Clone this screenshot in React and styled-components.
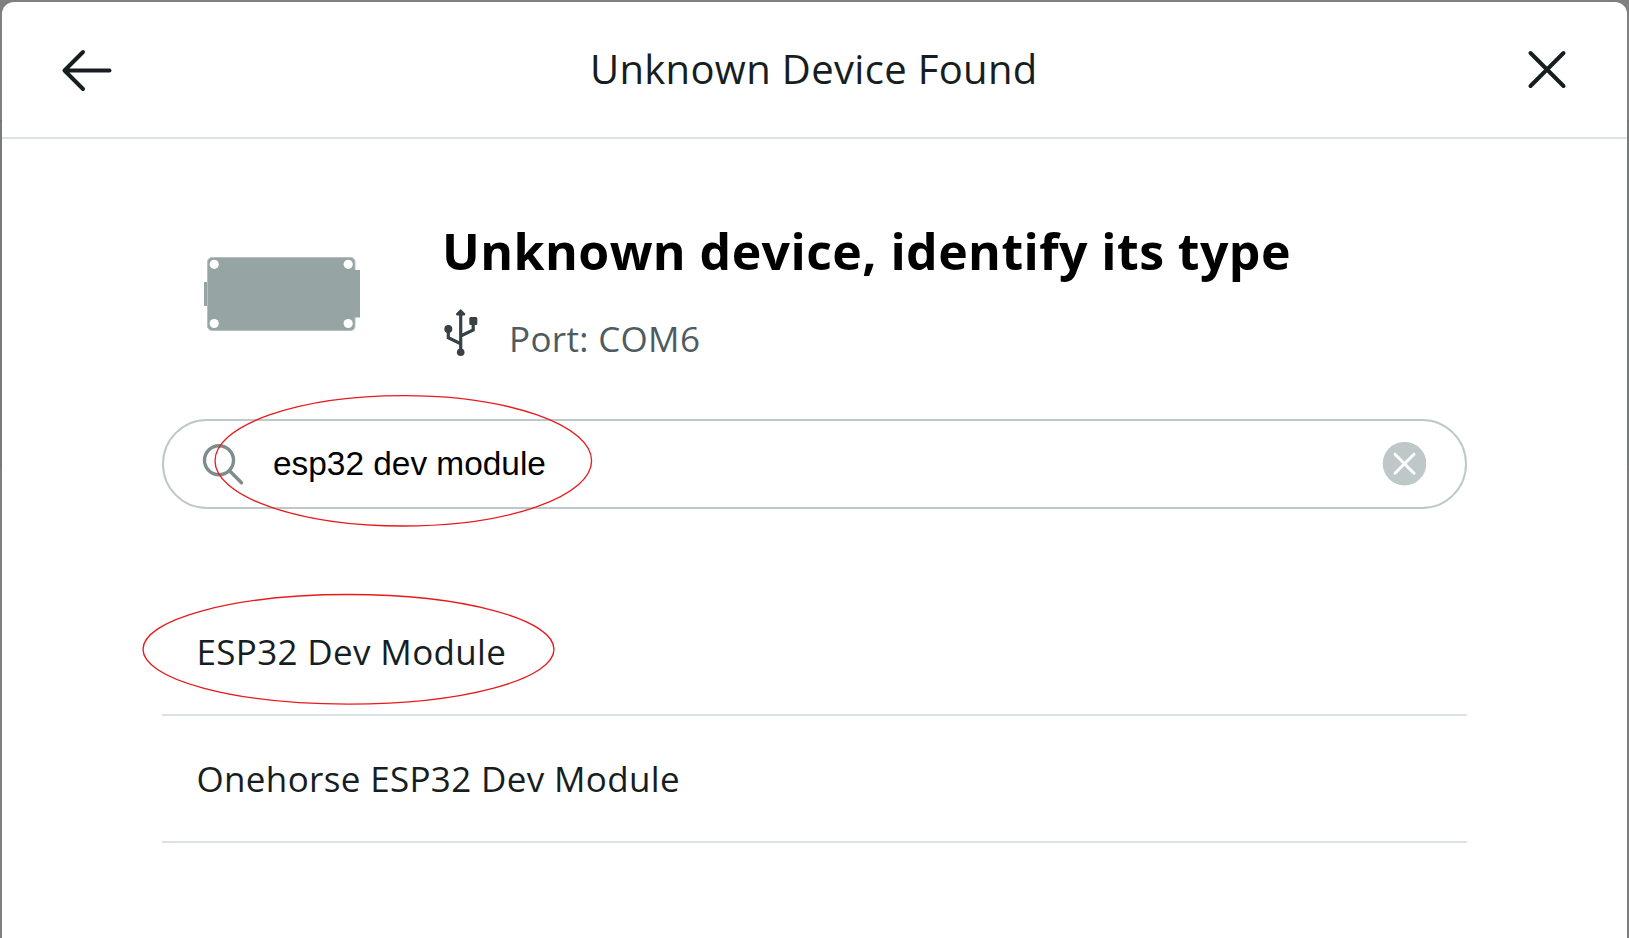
import React from "react";
import styled, { createGlobalStyle } from "styled-components";

const GlobalStyle = createGlobalStyle`
  * { box-sizing: border-box; }
  body { margin: 0; background: #7f7f7f; overflow: hidden; }
`;

const Backdrop = styled.div`
  width: 1629px;
  height: 938px;
  padding: 2px 2px 0;
  background: linear-gradient(#808080 0 120px, #6f7374 120px 121px, #787b7c 121px 470px, #7f7f7f 470px);
  font-family: "Open Sans", sans-serif;
`;

const Dialog = styled.main`
  position: relative;
  height: 936px;
  border-radius: 12px 12px 0 0;
  background: #fff;
`;

const Header = styled.header`
  display: grid;
  grid-template-columns: 1fr auto 1fr;
  align-items: center;
  height: 137px;
  padding: 0 60.5px 0 56px;
  border-bottom: 2px solid #dae3e3;
`;

const Title = styled.h1`
  margin: 0;
  padding: 0 0 2px 3px;
  font-size: 40px;
  font-weight: 400;
  line-height: 54px;
  letter-spacing: 0.33px;
  color: #171e21;
`;

const IconButton = styled.button`
  display: flex;
  justify-self: ${(p) => (p.$end ? "end" : "start")};
  padding: 0;
  border: 0;
  background: none;
`;

const Content = styled.div`
  padding: 78px 160px 0;
`;

const Device = styled.section`
  display: flex;
  height: 202px;
  padding-left: 42px;
`;

const BoardSlot = styled.div`
  width: 238px;
  padding-top: 40px;
`;

const DeviceName = styled.h2`
  margin: 0;
  font-size: 50px;
  font-weight: 700;
  line-height: 68px;
  letter-spacing: 0.43px;
  color: #000;
  white-space: nowrap;
`;

const Port = styled.div`
  display: flex;
  gap: 31px;
  padding: 24px 0 0 2px;
`;

const PortName = styled.span`
  padding-top: 6px;
  font-size: 35px;
  line-height: 48px;
  letter-spacing: 0.33px;
  color: #4e5b61;
`;

const SearchBar = styled.div`
  display: flex;
  align-items: center;
  height: 90px;
  padding: 0 39px 0 38px;
  border: 2px solid #bfc8c8;
  border-radius: 45px;
`;

const SearchText = styled.span`
  flex: 1;
  margin-left: 29px;
  padding-bottom: 1px;
  font-family: "Liberation Sans", Arial, sans-serif;
  font-size: 33.4px;
  line-height: 38px;
  color: #000;
`;

const Results = styled.ul`
  margin: 80px 0 0;
  padding: 0;
  list-style: none;
`;

const Result = styled.li`
  display: flex;
  align-items: center;
  height: 127px;
  padding-left: 34.5px;
  border-bottom: 2px solid #dae3e3;
  font-size: 35px;
  letter-spacing: 0.34px;
  color: #171e21;
`;

const Annotations = styled.svg`
  position: absolute;
  left: -2px;
  top: -2px;
  pointer-events: none;
`;

const BackIcon = () => (
  <svg width="58" height="44" viewBox="0 0 58 44" fill="none" stroke="#171e21" strokeWidth="4" strokeLinecap="round" strokeLinejoin="round">
    <path d="M25 4 6.500 22.500l18.500 18.500M6.500 22.500h45" />
  </svg>
);

const CloseIcon = () => (
  <svg width="40" height="40" viewBox="0 0 40 40" fill="none" stroke="#171e21" strokeWidth="4" strokeLinecap="round">
    <path d="m3.500 3 33 33m0-33-33 33" />
  </svg>
);

const Board = () => (
  <svg width="156" height="74" viewBox="0 0 156 74">
    <path fill="#97a4a4" d="M0 25h3v24H0z" />
    <rect x="3.500" y=".5" width="147.500" height="73" rx="4.500" fill="#97a4a4" stroke="#b4c0c0" />
    <path fill="#97a4a4" d="M150 13h6v47.500h-6z" />
    <g fill="#fff">
      <circle cx="10.200" cy="7.300" r="4.600" />
      <circle cx="144.200" cy="7.300" r="4.600" />
      <circle cx="10.200" cy="66.500" r="4.600" />
      <circle cx="144.200" cy="66.500" r="4.600" />
    </g>
  </svg>
);

const UsbIcon = () => (
  <svg width="34" height="48" viewBox="0 0 34 48" fill="#374146">
    <path d="M16.700.5 20.700 4.500v1.500h-8V4.500z" stroke="#374146" strokeLinejoin="round" strokeWidth="1" />
    <rect x="25.300" y="8" width="8" height="8" rx="1.500" />
    <circle cx="4.300" cy="20" r="4" />
    <circle cx="16.700" cy="43.300" r="3.800" />
    <path d="M16.700 5v37M4.300 21v7.800l12.400 6M29.200 14v7l-12.500 6" fill="none" stroke="#374146" strokeWidth="3.200" />
  </svg>
);

const SearchIcon = () => (
  <svg width="42" height="42" viewBox="0 0 42 42" fill="none" stroke="#7f8c8d" strokeWidth="3.400" strokeLinecap="round">
    <circle cx="17" cy="17.200" r="14.500" />
    <path d="m27.500 27.700 12 12" />
  </svg>
);

const ClearIcon = () => (
  <svg width="44" height="44" viewBox="0 0 44 44">
    <circle cx="22.500" cy="21.700" r="21.800" fill="#bfc8c8" />
    <path d="m13 12.200 19 19m0-19-19 19" fill="none" stroke="#fff" strokeWidth="3" strokeLinecap="round" />
  </svg>
);

const boards = ["ESP32 Dev Module", "Onehorse ESP32 Dev Module"];

export default function App() {
  return (
    <Backdrop>
      <GlobalStyle />
      <Dialog>
        <Header>
          <IconButton aria-label="Back"><BackIcon /></IconButton>
          <Title>Unknown Device Found</Title>
          <IconButton $end aria-label="Close"><CloseIcon /></IconButton>
        </Header>
        <Content>
          <Device>
            <BoardSlot><Board /></BoardSlot>
            <div>
              <DeviceName>Unknown device, identify its type</DeviceName>
              <Port><UsbIcon /><PortName>Port: COM6</PortName></Port>
            </div>
          </Device>
          <SearchBar>
            <SearchIcon />
            <SearchText>esp32 dev module</SearchText>
            <IconButton aria-label="Clear"><ClearIcon /></IconButton>
          </SearchBar>
          <Results>
            {boards.map((name) => <Result key={name}>{name}</Result>)}
          </Results>
        </Content>
        <Annotations width="1629" height="938" fill="none" stroke="#e81a1c" strokeWidth="1.350">
          <ellipse cx="403.300" cy="460.800" rx="188.300" ry="65.200" />
          <ellipse cx="348.500" cy="649.300" rx="205.500" ry="54.800" />
        </Annotations>
      </Dialog>
    </Backdrop>
  );
}
